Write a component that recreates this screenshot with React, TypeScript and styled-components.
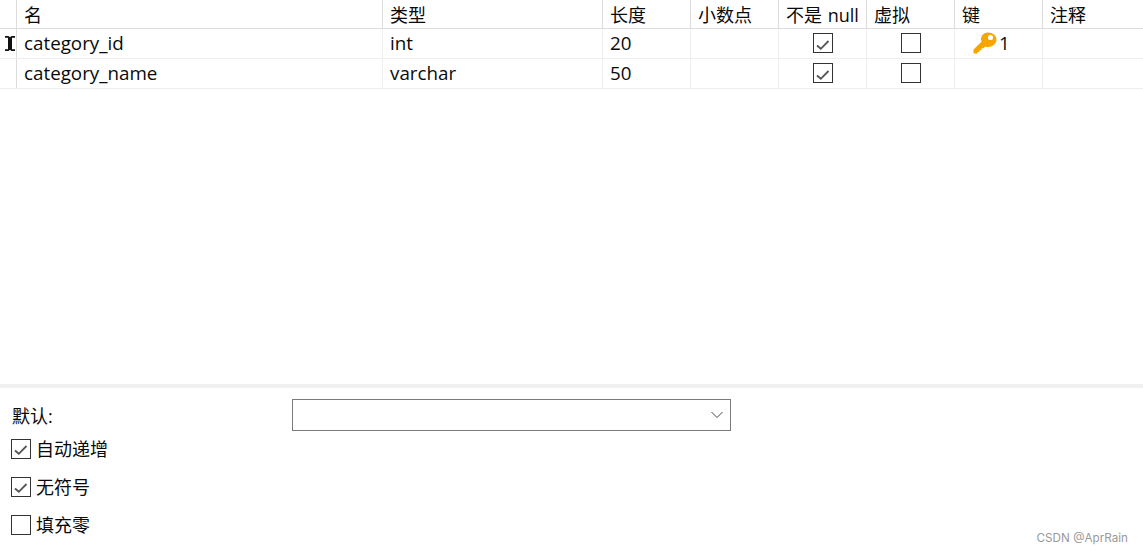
import styled, { createGlobalStyle } from "styled-components";

const COLUMNS = [
  { label: "名", width: 366 },
  { label: "类型", width: 220 },
  { label: "长度", width: 88 },
  { label: "小数点", width: 88 },
  { label: "不是 null", width: 88 },
  { label: "虚拟", width: 88 },
  { label: "键", width: 88 },
  { label: "注释", width: 100 }
];

const FIELDS = [
  { name: "category_id", type: "int", length: "20", keyOrder: "1", cursor: true },
  { name: "category_name", type: "varchar", length: "50", keyOrder: "", cursor: false }
];

const OPTIONS = [
  { label: "自动递增", checked: true },
  { label: "无符号", checked: true },
  { label: "填充零", checked: false }
];

const GRID_COLUMNS = `17px ${COLUMNS.map((c) => `${c.width}px`).join(" ")}`;

const CheckBox = ({ checked }: { checked: boolean }) => (
  <Box>
    {checked && (
      <svg width="18" height="18" viewBox="0 0 18 18">
        <path d="M3 9.5 L6.8 12.8 L14.5 5" fill="none" stroke="#555555" strokeWidth="1.8" />
      </svg>
    )}
  </Box>
);

const KeyIcon = () => (
  <svg width="24" height="22" viewBox="0 0 24 22">
    <path
      d="M15 0.5 C19.5 0.5 23.5 3.5 23.5 7.8 C23.5 11.8 19.5 15 15 15 C14 15 13.2 14.8 12.4 14.4 L10.5 16.2 L8.5 16.2 L8.5 18.2 L6.5 18.2 L6.5 20 L4.5 20 L4.5 21.5 L0.5 21.5 L0.5 17.5 L8.8 9.6 C8.2 8.8 8 8 8 7.5 C8 3.5 11 0.5 15 0.5 Z"
      fill="#f7a600"
    />
    <circle cx="17.5" cy="5.5" r="2.6" fill="#ffffff" />
  </svg>
);

const IBeamCursor = () => (
  <svg width="12" height="17" viewBox="0 0 12 17">
    <path
      d="M1 1 H4.5 L6 2.2 L7.5 1 H11 V2.8 H8 V14.2 H11 V16 H7.5 L6 14.8 L4.5 16 H1 V14.2 H4 V2.8 H1 Z"
      fill="#111111"
    />
  </svg>
);

const App = () => {
  return (
    <Page>
      <GlobalStyle />
      <Table>
        <HeaderRow>
          <HeaderIndicator />
          {COLUMNS.map((column) => (
            <HeaderCell key={column.label}>{column.label}</HeaderCell>
          ))}
        </HeaderRow>
        {FIELDS.map((field) => (
          <Row key={field.name}>
            <Indicator>{field.cursor && <IBeamCursor />}</Indicator>
            <Cell>{field.name}</Cell>
            <Cell>{field.type}</Cell>
            <Cell>{field.length}</Cell>
            <Cell />
            <CheckCell>
              <CheckBox checked />
            </CheckCell>
            <CheckCell>
              <CheckBox checked={false} />
            </CheckCell>
            <KeyCell>
              {field.keyOrder && (
                <>
                  <KeyIcon />
                  <span>{field.keyOrder}</span>
                </>
              )}
            </KeyCell>
            <Cell />
          </Row>
        ))}
      </Table>
      <Splitter />
      <Options>
        <DefaultRow>
          <DefaultLabel>默认:</DefaultLabel>
          <Select>
            <svg width="12" height="8" viewBox="0 0 12 8">
              <path d="M0.5 1 L6 6.5 L11.5 1" fill="none" stroke="#444444" strokeWidth="1" />
            </svg>
          </Select>
        </DefaultRow>
        <OptionList>
          {OPTIONS.map((option) => (
            <OptionRow key={option.label}>
              <CheckBox checked={option.checked} />
              <span>{option.label}</span>
            </OptionRow>
          ))}
        </OptionList>
      </Options>
      <Watermark>CSDN @AprRain</Watermark>
    </Page>
  );
};

const GlobalStyle = createGlobalStyle`
  html, body {
    margin: 0;
    padding: 0;
    background: #fff;
  }
`;

const Page = styled.div`
  position: relative;
  width: 1143px;
  height: 554px;
  overflow: hidden;
  background: #fff;
  color: #0a0a0a;
  font-family: "Open Sans", "Noto Sans CJK SC", sans-serif;
  font-size: 18px;
`;

const Table = styled.div`
  height: 384px;
`;

const HeaderRow = styled.div`
  display: grid;
  grid-template-columns: ${GRID_COLUMNS};
  height: 29px;
  border-bottom: 1px solid #dcdcdc;
  box-sizing: border-box;
`;

const HeaderIndicator = styled.div`
  border-right: 1px solid #dcdcdc;
`;

const HeaderCell = styled.div`
  display: flex;
  align-items: center;
  padding-left: 7px;
  border-right: 1px solid #dcdcdc;
  white-space: pre;
  word-spacing: 1px;
  overflow: hidden;

  &:last-child {
    border-right: none;
  }
`;

const Row = styled.div`
  display: grid;
  grid-template-columns: ${GRID_COLUMNS};
  height: 30px;
  border-bottom: 1px solid #eeeeee;
  box-sizing: border-box;
`;

const Indicator = styled.div`
  display: flex;
  align-items: center;
  justify-content: center;
  padding-left: 3px;
  padding-bottom: 1px;
  border-right: 1px solid #dcdcdc;
`;

const Cell = styled.div`
  display: flex;
  align-items: center;
  padding-left: 7px;
  padding-bottom: 2px;
  font-size: 18.8px;
  border-right: 1px solid #eeeeee;

  &:last-child {
    border-right: none;
  }
`;

const CheckCell = styled(Cell)`
  justify-content: center;
  padding-left: 0;
`;

const KeyCell = styled(Cell)`
  gap: 2px;
  padding-left: 18px;
`;

const Box = styled.div`
  width: 20px;
  height: 20px;
  box-sizing: border-box;
  border: 1px solid #333;
  background: #fff;
  flex-shrink: 0;
`;

const Splitter = styled.div`
  height: 4px;
  background: #f0f0f0;
`;

const Options = styled.div`
  padding: 11px 0 0 11px;
`;

const DefaultRow = styled.div`
  display: flex;
  align-items: center;
  height: 32px;
`;

const DefaultLabel = styled.div`
  width: 281px;
  margin-right: -1px;
  padding-left: 1px;
`;

const Select = styled.div`
  display: flex;
  align-items: center;
  justify-content: flex-end;
  width: 439px;
  height: 32px;
  padding-right: 7px;
  box-sizing: border-box;
  border: 1px solid #7a7a7a;
`;

const OptionList = styled.div`
  display: flex;
  flex-direction: column;
  gap: 18px;
  margin-top: 8px;

  span {
    margin-top: -2px;
  }
`;

const OptionRow = styled.div`
  display: flex;
  align-items: center;
  gap: 5px;
  height: 20px;
`;

const Watermark = styled.div`
  position: absolute;
  right: 15px;
  bottom: 9px;
  font-family: "Inter", "Liberation Sans", sans-serif;
  font-size: 11.7px;
  color: #9a9a9a;
`;

export default App;
